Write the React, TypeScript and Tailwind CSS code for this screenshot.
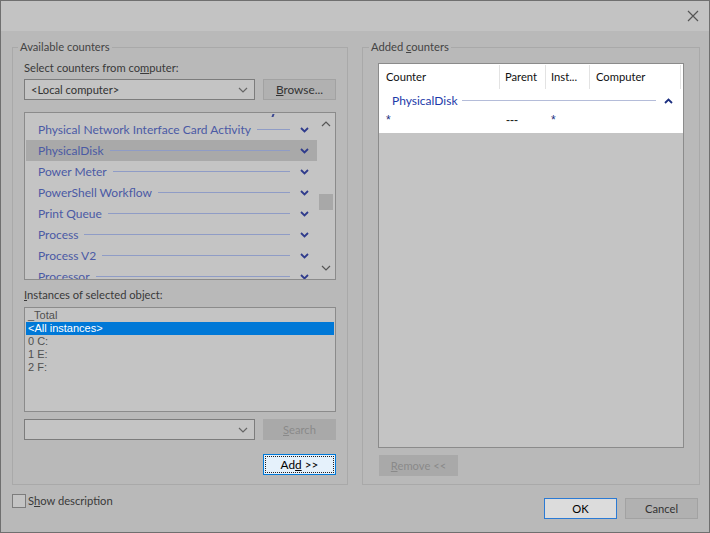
import React from 'react'

const counters = [
	'Physical Network Interface Card Activity',
	'PhysicalDisk',
	'Power Meter',
	'PowerShell Workflow',
	'Print Queue',
	'Process',
	'Process V2',
	'Processor',
]

const instances = ['_Total', '<All instances>', '0 C:', '1 E:', '2 F:']

function Chevron({ up = false, className = '' }: { up?: boolean; className?: string }) {
	return (
		<svg width="9" height="6" viewBox="0 0 9 6" className={className}>
			<path
				d={up ? 'M1 5 L4.5 1.5 L8 5' : 'M1 1 L4.5 4.5 L8 1'}
				fill="none"
				stroke="currentColor"
				strokeWidth="1.8"
			/>
		</svg>
	)
}

function ThinChevron({ up = false }: { up?: boolean }) {
	return (
		<svg width="10" height="6" viewBox="0 0 10 6">
			<path
				d={up ? 'M1 5 L5 1 L9 5' : 'M1 1 L5 5 L9 1'}
				fill="none"
				stroke="currentColor"
				strokeWidth="1.2"
			/>
		</svg>
	)
}

function Combo({ text }: { text?: string }) {
	return (
		<div className="flex h-[21px] w-[231px] items-center justify-between border border-[#7c7c7c] bg-[#c4c4c4] pl-[6px] pr-[6px] text-[#333]">
			<span>{text}</span>
			<span className="text-[#666]">
				<ThinChevron />
			</span>
		</div>
	)
}

function Btn({
	children,
	variant = 'normal',
	className = '',
}: {
	children: React.ReactNode
	variant?: 'normal' | 'disabled' | 'focus' | 'default'
	className?: string
}) {
	const styles = {
		normal: 'border-[#a2a2a2] bg-[#b1b1b1] text-[#333]',
		disabled: 'border-[#a9a9a9] bg-[#a9a9a9] text-[#8a8a8a]',
		focus: 'border-[#0078d7] bg-[#e5f1fb] text-[#000]',
		default: 'border-[#2b7ad4] bg-[#dcdcdc] text-[#000]',
	}
	return (
		<div
			className={`flex h-[21px] w-[73px] items-center justify-center border ${styles[variant]} ${className}`}
		>
			{children}
		</div>
	)
}

export default function App() {
	return (
		<div className="flex h-[533px] w-[710px] flex-col border border-[#6f6f6f] bg-[#b9b9b9] font-['Lato',sans-serif] text-[11.2px] leading-[14px] text-[#3a3a3a]">
			<div className="flex h-[30px] shrink-0 items-center justify-end bg-[#c3c3c3] pr-[10px] text-[#555]">
				<svg width="12" height="12" viewBox="0 0 12 12">
					<path d="M1 1 L11 11 M11 1 L1 11" stroke="currentColor" strokeWidth="1.2" />
				</svg>
			</div>

			<div className="flex gap-[14px] pl-[11px] pt-[9px]">
				<fieldset className="h-[445px] w-[336px] border border-[#a9a9a9] px-[11px]">
					<legend className="ml-[-6px] px-[2px] text-[#444]">Available counters</legend>
					<div className="mt-[7px]">
						Select counters from co<span className="underline">m</span>puter:
					</div>
					<div className="mt-[4px] flex justify-between">
						<Combo text="<Local computer>" />
						<Btn className="text-[11.8px]">
							<span>
								<span className="underline">B</span>rowse...
							</span>
						</Btn>
					</div>

					<div className="mt-[12px] flex h-[168px] border border-[#8b8b8b] bg-[#c4c4c4]">
						<div className="relative flex-1 overflow-hidden pt-[6px] pl-[1px]">
							<div className="absolute left-[247px] top-[1px] h-[3px] w-[2px] skew-x-[-20deg] bg-[#3a4690]" />
							{counters.map((c, i) => (
								<div
									key={c}
									className={`flex h-[21px] items-center pl-[12px] pr-[8px] ${i === 1 ? 'bg-[#a9a9a9]' : ''}`}
								>
									<span className="text-[12px] text-[#4b5aa4]">{c}</span>
									<div className="ml-[6px] mr-[10px] h-px flex-1 bg-[#8f9cc6]" />
									<span className="text-[#2f3b8c]">
										<Chevron />
									</span>
								</div>
							))}
						</div>
						<div className="flex w-[18px] flex-col items-center justify-between py-[8px] text-[#555]">
							<ThinChevron up />
							<div className="mt-[67px] h-[16px] w-[14px] bg-[#a8a8a8]" />
							<div className="flex-1" />
							<ThinChevron />
						</div>
					</div>

					<div className="mt-[8px]">
						<span className="underline">I</span>nstances of selected object:
					</div>
					<div className="mt-[5px] h-[105px] border border-[#8b8b8b] bg-[#c4c4c4] px-[1px] pt-[1px] font-['Liberation_Sans',sans-serif] text-[11px] leading-[13px] text-[#505050]">
						{instances.map((t, i) => (
							<div
								key={t}
								className={`h-[13px] pl-[2px] ${i === 1 ? 'bg-[#0078d7] text-white' : ''}`}
							>
								{t}
							</div>
						))}
					</div>

					<div className="mt-[7px] flex justify-between">
						<Combo />
						<Btn variant="disabled">
							<span>
								<span className="underline">S</span>earch
							</span>
						</Btn>
					</div>
					<div className="mt-[14px] flex justify-end">
						<Btn variant="focus" className="p-[1px]">
							<div className="flex h-full w-full items-center justify-center border border-dotted border-[#222] text-[11.8px]">
								Ad<span className="underline">d</span>&nbsp;&gt;&gt;
							</div>
						</Btn>
					</div>
				</fieldset>

				<fieldset className="h-[445px] w-[335px] border border-[#a9a9a9] px-[15px]">
					<legend className="ml-[-9px] px-[2px] text-[#444]">
						Added <span className="underline">c</span>ounters
					</legend>
					<div className="mt-[9px] flex h-[385px] w-[306px] flex-col border border-[#8b8b8b] bg-[#c4c4c4]">
						<div className="bg-white pb-[7px] text-[#111]">
							<div className="flex h-[25px] items-center pt-[1px]">
								<div className="flex h-full w-[121px] items-center border-r border-[#e3e3e3] pl-[7px]">Counter</div>
								<div className="flex h-full w-[46px] items-center border-r border-[#e3e3e3] pl-[5px]">Parent</div>
								<div className="flex h-full w-[44px] items-center border-r border-[#e3e3e3] pl-[5px]">Inst...</div>
								<div className="flex h-full w-[91px] items-center border-r border-[#e3e3e3] pl-[6px]">Computer</div>
							</div>
							<div className="mt-[3px] flex h-[17px] items-center pl-[13px] pr-[10px]">
								<span className="text-[12px] text-[#1c3aa9]">PhysicalDisk</span>
								<div className="ml-[4px] mr-[8px] h-px flex-1 bg-[#b4bcd9]" />
								<span className="text-[#1c2f80]">
									<Chevron up />
								</span>
							</div>
							<div className="mt-[1px] flex h-[16px] items-end font-['Liberation_Sans',sans-serif] text-[12px] leading-[12px] text-[#1c2f80]">
								<div className="w-[121px] pl-[7px]">*</div>
								<div className="w-[46px] pl-[6px] text-[#222]">---</div>
								<div className="pl-[5px]">*</div>
							</div>
						</div>
					</div>
					<Btn variant="disabled" className="mt-[7px] ml-[1px] w-[79px]">
						<span>
							<span className="underline">R</span>emove &lt;&lt;
						</span>
					</Btn>
				</fieldset>
			</div>

			<div className="flex items-start justify-between pl-[11px] pr-[11px]">
				<div className="mt-[9px] flex items-center gap-[2px]">
					<div className="h-[14px] w-[14px] border border-[#7c7c7c] bg-[#c4c4c4]" />
					<span>
						S<span className="underline">h</span>ow description
					</span>
				</div>
				<div className="mt-[13px] flex gap-[8px]">
					<Btn variant="default">OK</Btn>
					<Btn>Cancel</Btn>
				</div>
			</div>
		</div>
	)
}
